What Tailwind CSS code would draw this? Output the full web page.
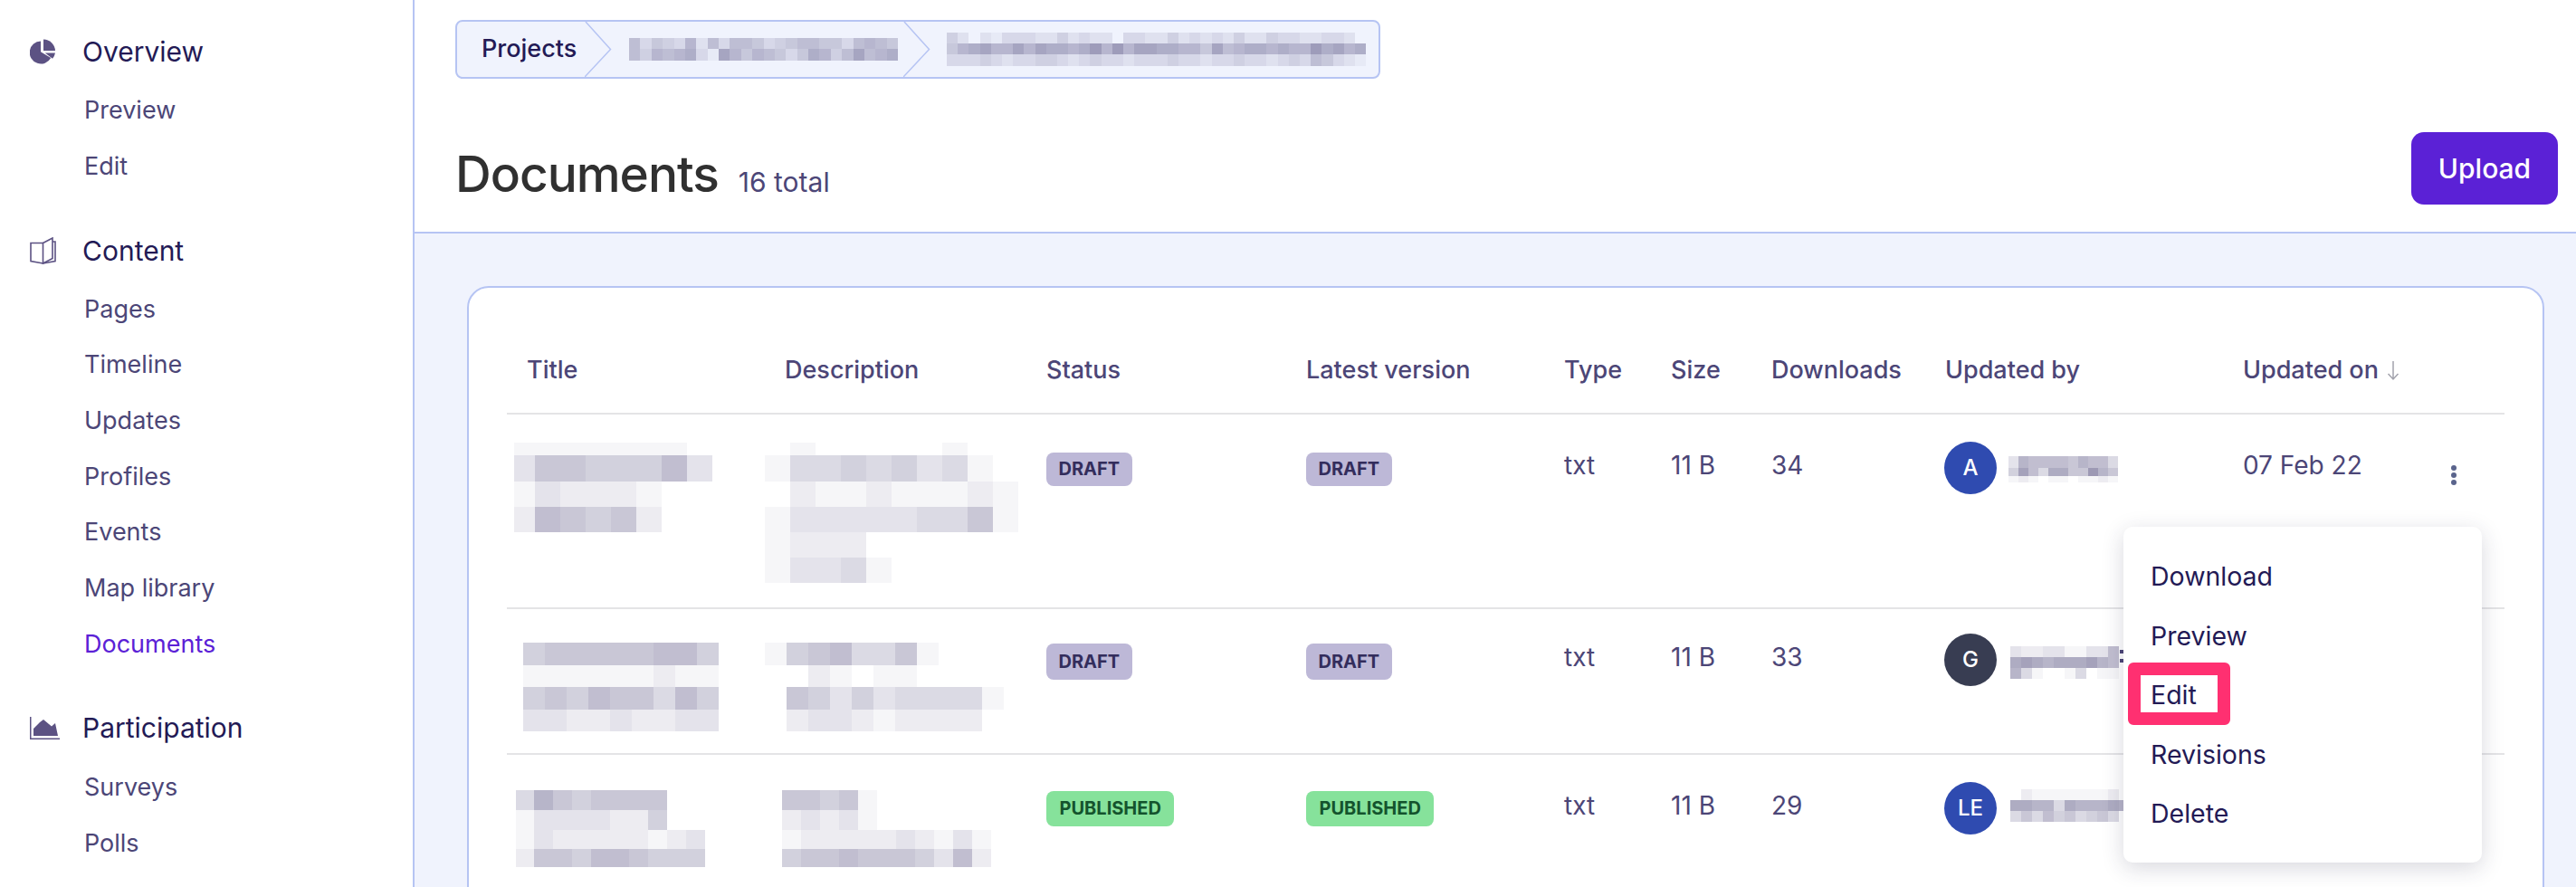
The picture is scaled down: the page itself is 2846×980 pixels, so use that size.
<!DOCTYPE html>
<html lang="en">
<head>
<meta charset="utf-8"/>
<title>Documents</title>
<script src="https://cdn.jsdelivr.net/npm/@tailwindcss/browser@4"></script>
</head>
<body class="bg-white font-[Inter,sans-serif] text-[#4c4677] h-screen overflow-hidden flex">

<!-- sidebar -->
<aside class="w-[458px] shrink-0 border-r-2 border-[#b6c4f3] pt-[26px] text-[27px]">
  <div class="mb-[31px]">
    <div class="h-[62px] mb-[3px] flex items-center pl-[33px]">
      <svg class="w-[28px] h-[28px] fill-[#5c5283]" viewBox="0 0 28 28"><path d="M12 2.500A12.500 12.500 0 1 0 23.200 21L12 14.200Z"/><path d="M15 0.500A13 13 0 0 1 28 13H15Z"/><path d="M16.800 15.500H28A13 13 0 0 1 25 21.800Z"/></svg>
      <span class="ml-[30px] text-[30px] text-[#231a55]">Overview</span>
    </div>
    <a class="h-[62px] flex items-center pl-[93px]">Preview</a>
    <a class="h-[62px] flex items-center pl-[93px]">Edit</a>
  </div>
  <div class="mb-[31px]">
    <div class="h-[62px] mb-[3px] flex items-center pl-[33px]">
      <svg class="w-[29px] h-[30px] fill-none stroke-[#5c5283] stroke-[1.6]" viewBox="0 0 29 30"><path d="M14.500 6.500H1V26.500L14.500 29L28 26.500V5H25"/><path d="M14.500 6.500L25 1V23.500L14.500 29Z"/></svg>
      <span class="ml-[29px] text-[30px] text-[#231a55]">Content</span>
    </div>
    <a class="h-[61.700px] flex items-center pl-[93px]">Pages</a>
    <a class="h-[61.700px] flex items-center pl-[93px]">Timeline</a>
    <a class="h-[61.700px] flex items-center pl-[93px]">Updates</a>
    <a class="h-[61.700px] flex items-center pl-[93px]">Profiles</a>
    <a class="h-[61.700px] flex items-center pl-[93px]">Events</a>
    <a class="h-[61.700px] flex items-center pl-[93px]">Map library</a>
    <a class="h-[61.700px] flex items-center pl-[93px] text-[#5b21d6]">Documents</a>
  </div>
  <div>
    <div class="h-[62px] mb-[3px] flex items-center pl-[33px]">
      <svg class="w-[33px] h-[25px]" viewBox="0 0 33 25"><path class="fill-none stroke-[#5c5283] stroke-[1.500]" d="M0.750 0V24.250H33"/><path class="fill-[#5c5283]" d="M4 21V13L11 6L15 3L21 8L24 10.500L28 7L31 21Z"/></svg>
      <span class="ml-[25px] text-[30px] text-[#231a55]">Participation</span>
    </div>
    <a class="h-[62px] flex items-center pl-[93px]">Surveys</a>
    <a class="h-[62px] flex items-center pl-[93px]">Polls</a>
  </div>
</aside>

<main class="flex-1 min-w-0 bg-[#f0f3fd]">
  <!-- page header -->
  <header class="h-[258px] bg-white border-b-2 border-[#b6c4f3] pl-[45px] pr-[20px] pt-[22px]">
    <nav class="w-[1022px] h-[65px] bg-[#f0f3fd] border-2 border-[#b6c4f3] rounded-[8px] flex items-center">
      <span class="w-[141px] pl-[27px] text-[27px] font-medium text-[#231a55]">Projects</span>
      <svg class="w-[30px] h-[61px] fill-none stroke-[#b6c4f3] stroke-[1.500]" viewBox="0 0 30 61"><path d="M1 0L28.500 30.500L0 61"/></svg>
      <div class="ml-[19px] w-[297px]" data-mosaic="bc1"></div>
      <svg class="ml-[6px] w-[30px] h-[61px] fill-none stroke-[#b6c4f3] stroke-[1.500]" viewBox="0 0 30 61"><path d="M1 0L28.500 30.500L0 61"/></svg>
      <div class="ml-[18px]" data-mosaic="bc2"></div>
    </nav>
    <div class="mt-[59px] flex justify-between items-center">
      <div class="flex items-baseline pt-[12px]">
        <h1 class="text-[55px] leading-[64px] tracking-[-1px] font-medium text-[#303030]">Documents</h1>
        <span class="ml-[22px] text-[30px]">16 total</span>
      </div>
      <button class="w-[162px] h-[80px] rounded-[14px] bg-[#5b21d6] text-white text-[30px] font-medium">Upload</button>
    </div>
  </header>

  <!-- documents card -->
  <section class="relative ml-[58px] mr-[35px] mt-[58px] h-[800px] bg-white border-2 border-[#b6c4f3] rounded-[24px] pl-[42px] pr-[42px] text-[28px]">
    <div class="h-[140px] border-b-2 border-[#e4e4e6] grid grid-cols-[285px_289px_287px_285px_118px_111px_192px_329px_311px] pt-[73px] font-medium text-[27px] leading-[36px]">
      <div class="pl-[22px]">Title</div>
      <div class="pl-[22px]">Description</div>
      <div class="pl-[22px]">Status</div>
      <div class="pl-[22px]">Latest version</div>
      <div class="pl-[22px]">Type</div>
      <div class="pl-[22px]">Size</div>
      <div class="pl-[22px]">Downloads</div>
      <div class="pl-[22px]">Updated by</div>
      <div class="pl-[22px] h-[36px] flex items-center">Updated on
        <svg class="ml-[9px] w-[14px] h-[26px] fill-none stroke-[#a3a3ad] stroke-[1.500]" viewBox="0 0 14 26"><path d="M7 3V23M1.500 17L7 23L12.500 17"/></svg>
      </div>
    </div>

    <!-- row 1 -->
    <div class="h-[215px] border-b-2 border-[#e4e4e6] grid grid-cols-[285px_289px_287px_285px_118px_111px_192px_329px_311px] pt-[31px] leading-[36px]">
      <div class="pl-[8px]" data-mosaic="t1"></div>
      <div data-mosaic="d1"></div>
      <div class="pl-[22px] mt-[8px]"><span class="inline-block h-[37px] leading-[37px] px-[13.500px] rounded-[8px] bg-[#bdb8d7] text-[#332d5c] text-[20px] font-bold">DRAFT</span></div>
      <div class="pl-[22px] mt-[8px]"><span class="inline-block h-[37px] leading-[37px] px-[13.500px] rounded-[8px] bg-[#bdb8d7] text-[#332d5c] text-[20px] font-bold">DRAFT</span></div>
      <div class="pl-[22px] mt-[7px]">txt</div>
      <div class="pl-[22px] mt-[7px]">11 B</div>
      <div class="pl-[22px] mt-[7px]">34</div>
      <div class="pl-[21px] -mt-[1px] flex items-start">
        <span class="w-[58px] h-[58px] rounded-full bg-[#2f4bb0] text-white text-[24px] font-medium flex items-center justify-center">A</span>
        <div class="ml-[13px] mt-[16px]" data-mosaic="u1"></div>
      </div>
      <div class="pl-[22px] mt-[7px] flex justify-between">07 Feb 22
        <svg class="mr-[53px] mt-[18px] w-[6px] h-[22px] fill-[#5a648c]" viewBox="0 0 6 22"><circle cx="3" cy="3" r="3"/><circle cx="3" cy="11" r="3"/><circle cx="3" cy="19" r="3"/></svg>
      </div>
    </div>

    <!-- row 2 -->
    <div class="h-[161px] border-b-2 border-[#e4e4e6] grid grid-cols-[285px_289px_287px_285px_118px_111px_192px_329px_311px] pt-[37px] leading-[36px]">
      <div class="pl-[18px]" data-mosaic="t2"></div>
      <div data-mosaic="d2"></div>
      <div class="pl-[22px]"><span class="inline-block h-[40px] leading-[40px] px-[13.500px] rounded-[8px] bg-[#bdb8d7] text-[#332d5c] text-[20px] font-bold">DRAFT</span></div>
      <div class="pl-[22px]"><span class="inline-block h-[40px] leading-[40px] px-[13.500px] rounded-[8px] bg-[#bdb8d7] text-[#332d5c] text-[20px] font-bold">DRAFT</span></div>
      <div class="pl-[22px] -mt-[2px]">txt</div>
      <div class="pl-[22px] -mt-[2px]">11 B</div>
      <div class="pl-[22px] -mt-[2px]">33</div>
      <div class="pl-[21px] -mt-[10px] flex items-start">
        <span class="w-[58px] h-[58px] rounded-full bg-[#383d52] text-white text-[24px] font-medium flex items-center justify-center">G</span>
        <div class="ml-[15px] mt-[14px]" data-mosaic="u2"></div>
        <svg class="ml-[1px] mt-[18px] w-[4px] h-[14px] fill-[#4c4677]" viewBox="0 0 4 14"><rect width="4" height="4"/><rect y="10" width="4" height="4"/></svg>
      </div>
    </div>

    <!-- row 3 -->
    <div class="h-[200px] grid grid-cols-[285px_289px_287px_285px_118px_111px_192px_329px_311px] pt-[39px] leading-[36px]">
      <div class="pl-[10px]" data-mosaic="t3"></div>
      <div class="pl-[19px]" data-mosaic="d3"></div>
      <div class="pl-[22px] -mt-[1px]"><span class="inline-block h-[39px] leading-[39px] px-[14.500px] rounded-[8px] bg-[#86e29b] text-[#14532d] text-[20px] font-bold">PUBLISHED</span></div>
      <div class="pl-[22px] -mt-[1px]"><span class="inline-block h-[39px] leading-[39px] px-[14.500px] rounded-[8px] bg-[#86e29b] text-[#14532d] text-[20px] font-bold">PUBLISHED</span></div>
      <div class="pl-[22px] -mt-[1px]">txt</div>
      <div class="pl-[22px] -mt-[1px]">11 B</div>
      <div class="pl-[22px] -mt-[1px]">29</div>
      <div class="pl-[21px] -mt-[9px] flex items-start">
        <span class="w-[58px] h-[58px] rounded-full bg-[#2f4bb0] text-white text-[24px] font-medium flex items-center justify-center">LE</span>
        <div class="ml-[15px] mt-[8px]" data-mosaic="u3"></div>
      </div>
    </div>

    <!-- actions menu -->
    <div class="absolute left-[1828px] top-[264px] w-[396px] h-[371px] bg-white rounded-[10px] shadow-[0_6px_24px_rgba(40,40,70,0.18)] pt-[23px] pl-[30px] text-[#231a55] text-[28.500px]">
      <div class="h-[65.500px] flex items-center">Download</div>
      <div class="h-[65.500px] flex items-center">Preview</div>
      <div class="h-[65.500px] flex items-center">Edit</div>
      <div class="h-[65.500px] flex items-center">Revisions</div>
      <div class="h-[65.500px] flex items-center">Delete</div>
      <div class="absolute left-[5px] top-[150px] w-[113px] h-[69px] border-[14px] border-[#ff3071] rounded-[6px]"></div>
    </div>
  </section>
</main>

<script>
  // pixelated text: one hex digit per cell, ink strength in 5% steps
  const mosaics = {
    bc1: { cell: 12.400, heights: [12, 13], rows: [
      "635437263665345665536765", "647678319757653587469678"] },
    bc2: { cell: 12.200, heights: [12, 12, 13], rows: [
      "42021333224232203322423232422433223320",
      "5789779798878a7a79988775967887877a8978",
      "33343233443234332333433233433234365321"] },
    t1: { first: 23, cell: 28, heights: [14, 29, 28, 28], rows: ["11111110", "36655573", "13222100", "27656200"] },
    d1: { cell: 28, heights: [14, 29, 28, 28, 28, 28], rows: ["0100000100", "1445453410", "0211211121", "1333334461", "1222000000", "1334100000"] },
    t2: { cell: 24, heights: [25, 24, 25, 24], rows: ["5666667750", "1111112110", "5657664750", "3322322330"] },
    d2: { cell: 24, heights: [25, 24, 25, 24], rows: ["15674461000", "00210110000", "06535344441", "02332122220"] },
    t3: { first: 20, cell: 21, heights: [22, 22, 21, 20], rows: ["4865666600", "1333322500", "1322222123", "2665776555"] },
    d3: { cell: 21, heights: [22, 22, 21, 20], rows: ["66561000000", "23231000000", "12222232131", "56676665372"] },
    u1: { cell: 11, heights: [13, 9, 7], rows: ["38777768774", "5a749966b86", "12101101121"] },
    u2: { cell: 12, heights: [12, 12, 12], rows: ["3223311337", "9a98999a87", "8410014011"] },
    u3: { cell: 12, heights: [12, 12, 12], rows: ["02111111120", "99884988898", "46475645640"] },
  };

  document.querySelectorAll("[data-mosaic]").forEach((host) => {
    const m = mosaics[host.dataset.mosaic];
    m.rows.forEach((row, r) => {
      const line = document.createElement("div");
      line.className = "flex";
      line.style.height = m.heights[r] + "px";
      [...row].forEach((digit, i) => {
        const cell = document.createElement("div");
        cell.style.width = (i === 0 && m.first ? m.first : m.cell) + "px";
        cell.style.background = `rgba(76,70,119,${parseInt(digit, 16) * 0.05})`;
        line.appendChild(cell);
      });
      host.appendChild(line);
    });
  });
</script>
</body>
</html>
